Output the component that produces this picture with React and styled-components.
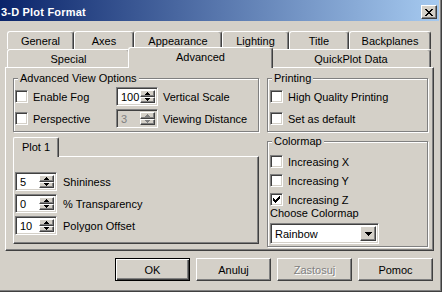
import React from 'react'
import styled, { createGlobalStyle, css } from 'styled-components'

const face = '#D4D0C8'
const shadow = '#808080'
const dark = '#404040'

const GlobalStyle = createGlobalStyle`
  html, body {
    margin: 0;
    padding: 0;
    background: ${face};
  }
  body {
    font-family: "Liberation Sans", Arial, sans-serif;
    font-size: 11px;
    color: #000;
  }
  * {
    box-sizing: border-box;
  }
`

const raised = css`
  border-top: 1px solid #fff;
  border-left: 1px solid #fff;
  border-right: 1px solid ${dark};
  border-bottom: 1px solid ${dark};
  box-shadow: inset -1px -1px 0 ${shadow};
`

const sunken = css`
  border-top: 1px solid ${shadow};
  border-left: 1px solid ${shadow};
  border-right: 1px solid #fff;
  border-bottom: 1px solid #fff;
  box-shadow: inset 1px 1px 0 ${dark}, inset -1px -1px 0 ${face};
`

const Window = styled.div`
  width: 442px;
  height: 292px;
  background: ${face};
  display: flex;
  flex-direction: column;
  border-right: 1px solid ${dark};
  border-bottom: 1px solid ${dark};
  box-shadow: inset -1px -1px 0 ${shadow};
  padding: 0 2px 2px 0;
`

const TitleBar = styled.div`
  height: 21px;
  padding: 3px 2px 0 1px;
  display: flex;
  align-items: center;
  justify-content: space-between;
  background: linear-gradient(90deg, #0a246a 0%, #a6caf0 100%);
`

const Title = styled.span`
  color: #fff;
  font-weight: bold;
  font-size: 11px;
  letter-spacing: 0.2px;
`

const CloseButton = styled.div`
  width: 16px;
  height: 14px;
  background: ${face};
  ${raised};
  display: flex;
  align-items: center;
  justify-content: center;
  padding-right: 1px;
`

const Body = styled.div`
  padding: 10px 5px 0 5px;
  display: flex;
  flex-direction: column;
`

const TabStrip = styled.div`
  margin: 0 2px;
  position: relative;
  z-index: 1;
  display: flex;
  flex-direction: column;
`

const TabRow = styled.div`
  display: flex;
  height: 18px;
`

const Tab = styled.div`
  width: ${(p) => p.$w}px;
  height: 18px;
  flex: none;
  background: ${face};
  border-top: 1px solid #fff;
  border-left: 1px solid #fff;
  border-right: 1px solid ${dark};
  box-shadow: inset -1px 0 0 ${shadow};
  border-radius: 3px 3px 0 0;
  text-align: center;
  line-height: 14px;
  padding-top: 2px;
  white-space: nowrap;
  ${(p) =>
    p.$active &&
    css`
      width: ${p.$w + 4}px;
      height: 21px;
      margin: -2px -2px 0 -2px;
      position: relative;
      z-index: 2;
      padding-top: 2px;
    `}
`

const Panel = styled.div`
  height: 184px;
  background: ${face};
  ${raised};
  padding: 4px 0 0 7px;
`

const Columns = styled.div`
  display: grid;
  grid-template-columns: 246px 161px;
  column-gap: 8px;
  align-items: start;
`

const Column = styled.div`
  display: flex;
  flex-direction: column;
`

const Group = styled.fieldset`
  margin: ${(p) => p.$top || 0}px 0 0 0;
  padding: ${(p) => p.$pt || 2}px 4px ${(p) => p.$pb || 3}px ${(p) => p.$pl || 1}px;
  min-width: 0;
  border: 1px solid ${shadow};
  box-shadow: inset 1px 1px 0 #fff, 1px 1px 0 #fff;
  display: flex;
  flex-direction: column;
  gap: ${(p) => p.$gap ?? 3}px;
`

const Legend = styled.legend`
  padding: 0 2px;
  margin-left: ${(p) => p.$ml ?? 3}px;
  line-height: 13px;
  background: ${face};
`

const FieldRow = styled.div`
  display: flex;
  align-items: center;
  height: ${(p) => p.$h || 19}px;
`

const CheckWrap = styled.div`
  display: flex;
  align-items: center;
  width: ${(p) => (p.$w ? `${p.$w}px` : 'auto')};
  flex: none;
`

const Box = styled.div`
  width: 13px;
  height: 13px;
  background: #fff;
  ${sunken};
  display: flex;
  align-items: center;
  justify-content: center;
  flex: none;
`

const CheckText = styled.span`
  margin-left: 5px;
  white-space: nowrap;
`

const SpinBox = styled.div`
  width: 42px;
  height: 19px;
  flex: none;
  display: flex;
  ${sunken};
  padding: 2px;
  background: ${(p) => (p.$disabled ? face : '#fff')};
`

const SpinValue = styled.div`
  flex: 1;
  line-height: 15px;
  padding-left: 2px;
  overflow: hidden;
  white-space: nowrap;
  color: ${(p) => (p.$disabled ? shadow : '#000')};
`

const SpinButtons = styled.div`
  width: 15px;
  display: flex;
  flex-direction: column;
`

const SpinButton = styled.div`
  flex: 1;
  background: ${face};
  ${raised};
  display: flex;
  align-items: center;
  justify-content: center;
`

const SideLabel = styled.span`
  margin-left: ${(p) => p.$ml ?? 5}px;
  white-space: nowrap;
`

const InnerTab = styled.div`
  width: 46px;
  height: 20px;
  margin-top: 5px;
  margin-bottom: -1px;
  position: relative;
  z-index: 1;
  background: ${face};
  border-top: 1px solid #fff;
  border-left: 1px solid #fff;
  border-right: 1px solid ${dark};
  box-shadow: inset -1px 0 0 ${shadow};
  border-radius: 2px 2px 0 0;
  text-align: center;
  line-height: 14px;
  padding-top: 2px;
`

const InnerPage = styled.div`
  height: 88px;
  ${raised};
  padding: 15px 0 0 1px;
  display: flex;
  flex-direction: column;
  gap: 3px;
`

const PlainLabel = styled.div`
  line-height: 13px;
  margin-top: ${(p) => p.$mt ?? 0}px;
  white-space: nowrap;
`

const Select = styled.div`
  width: 109px;
  height: 21px;
  margin-top: 3px;
  ${sunken};
  background: #fff;
  padding: 2px;
  display: flex;
`

const SelectValue = styled.div`
  flex: 1;
  line-height: 17px;
  padding-left: 2px;
`

const SelectButton = styled.div`
  width: 16px;
  background: ${face};
  ${raised};
  display: flex;
  align-items: center;
  justify-content: center;
`

const ButtonRow = styled.div`
  display: flex;
  justify-content: flex-end;
  gap: 6px;
  margin-top: 7px;
  padding-right: 1px;
`

const Button = styled.div`
  width: 75px;
  height: 23px;
  background: ${face};
  display: flex;
  align-items: center;
  justify-content: center;
  ${raised};
  color: ${(p) => (p.$disabled ? shadow : '#000')};
  text-shadow: ${(p) => (p.$disabled ? '1px 1px 0 #fff' : 'none')};
  ${(p) =>
    p.$default &&
    css`
      border: 1px solid #000;
      box-shadow: inset 1px 1px 0 #fff, inset -1px -1px 0 ${dark}, inset -2px -2px 0 ${shadow};
    `}
`

const Triangle = ({ up, color = '#000', w = 5, h = 3 }) => (
  <svg width={w} height={h} viewBox={`0 0 ${w} ${h}`} shapeRendering="crispEdges">
    <polygon
      points={up ? `0,${h} ${w},${h} ${w / 2},0` : `0,0 ${w},0 ${w / 2},${h}`}
      fill={color}
    />
  </svg>
)

const CloseGlyph = () => (
  <svg width="8" height="7" viewBox="0 0 8 7" shapeRendering="crispEdges">
    <path
      d="M0 0h2v1h-2zM6 0h2v1h-2zM1 1h2v1h-2zM5 1h2v1h-2zM2 2h4v1h-4zM3 3h2v1h-2zM2 4h4v1h-4zM1 5h2v1h-2zM5 5h2v1h-2zM0 6h2v1h-2zM6 6h2v1h-2z"
      fill="#000"
    />
  </svg>
)

const CheckGlyph = () => (
  <svg width="7" height="7" viewBox="0 0 7 7" shapeRendering="crispEdges">
    <path d="M6 0h1v3h-1zM5 1h1v3h-1zM4 2h1v3h-1zM3 3h1v3h-1zM2 4h1v3h-1zM1 3h1v3h-1zM0 2h1v3h-1z" fill="#000" />
  </svg>
)

const Check = ({ label, checked, w }) => (
  <CheckWrap $w={w}>
    <Box>{checked && <CheckGlyph />}</Box>
    <CheckText>{label}</CheckText>
  </CheckWrap>
)

const Spin = ({ value, disabled }) => {
  const arrow = disabled ? shadow : '#000'
  return (
    <SpinBox $disabled={disabled}>
      <SpinValue $disabled={disabled}>{value}</SpinValue>
      <SpinButtons>
        <SpinButton>
          <Triangle up color={arrow} />
        </SpinButton>
        <SpinButton>
          <Triangle color={arrow} />
        </SpinButton>
      </SpinButtons>
    </SpinBox>
  )
}

const topTabs = [
  ['General', 67],
  ['Axes', 60],
  ['Appearance', 88],
  ['Lighting', 67],
  ['Title', 60],
  ['Backplanes', 82],
]

const bottomTabs = [
  ['Special', 123],
  ['Advanced', 141, true],
  ['QuickPlot Data', 160],
]

const plotFields = [
  ['5', 'Shininess'],
  ['0', '% Transparency'],
  ['10', 'Polygon Offset'],
]

export default function App() {
  return (
    <>
      <GlobalStyle />
      <Window>
        <TitleBar>
          <Title>3-D Plot Format</Title>
          <CloseButton>
            <CloseGlyph />
          </CloseButton>
        </TitleBar>
        <Body>
          <TabStrip>
            <TabRow>
              {topTabs.map(([label, w]) => (
                <Tab key={label} $w={w}>
                  {label}
                </Tab>
              ))}
            </TabRow>
            <TabRow>
              {bottomTabs.map(([label, w, active]) => (
                <Tab key={label} $w={w} $active={active}>
                  {label}
                </Tab>
              ))}
            </TabRow>
          </TabStrip>
          <Panel>
            <Columns>
              <Column>
                <Group>
                  <Legend>Advanced View Options</Legend>
                  <FieldRow>
                    <Check label="Enable Fog" w={101} />
                    <Spin value="100" />
                    <SideLabel>Vertical Scale</SideLabel>
                  </FieldRow>
                  <FieldRow>
                    <Check label="Perspective" w={101} />
                    <Spin value="3" disabled />
                    <SideLabel>Viewing Distance</SideLabel>
                  </FieldRow>
                </Group>
                <InnerTab>Plot 1</InnerTab>
                <InnerPage>
                  {plotFields.map(([value, label]) => (
                    <FieldRow key={label}>
                      <Spin value={value} />
                      <SideLabel $ml={6}>{label}</SideLabel>
                    </FieldRow>
                  ))}
                </InnerPage>
              </Column>
              <Column>
                <Group $pl={2}>
                  <Legend $ml={2}>Printing</Legend>
                  <FieldRow>
                    <Check label="High Quality Printing" />
                  </FieldRow>
                  <FieldRow>
                    <Check label="Set as default" />
                  </FieldRow>
                </Group>
                <Group $pl={2} $top={3} $pt={4} $pb={2} $gap={0}>
                  <Legend $ml={2}>Colormap</Legend>
                  <FieldRow>
                    <Check label="Increasing X" />
                  </FieldRow>
                  <FieldRow>
                    <Check label="Increasing Y" />
                  </FieldRow>
                  <FieldRow>
                    <Check label="Increasing Z" checked />
                  </FieldRow>
                  <PlainLabel $mt={-2}>Choose Colormap</PlainLabel>
                  <Select>
                    <SelectValue>Rainbow</SelectValue>
                    <SelectButton>
                      <Triangle w={7} h={4} />
                    </SelectButton>
                  </Select>
                </Group>
              </Column>
            </Columns>
          </Panel>
          <ButtonRow>
            <Button $default>OK</Button>
            <Button>Anuluj</Button>
            <Button $disabled>Zastosuj</Button>
            <Button>Pomoc</Button>
          </ButtonRow>
        </Body>
      </Window>
    </>
  )
}
